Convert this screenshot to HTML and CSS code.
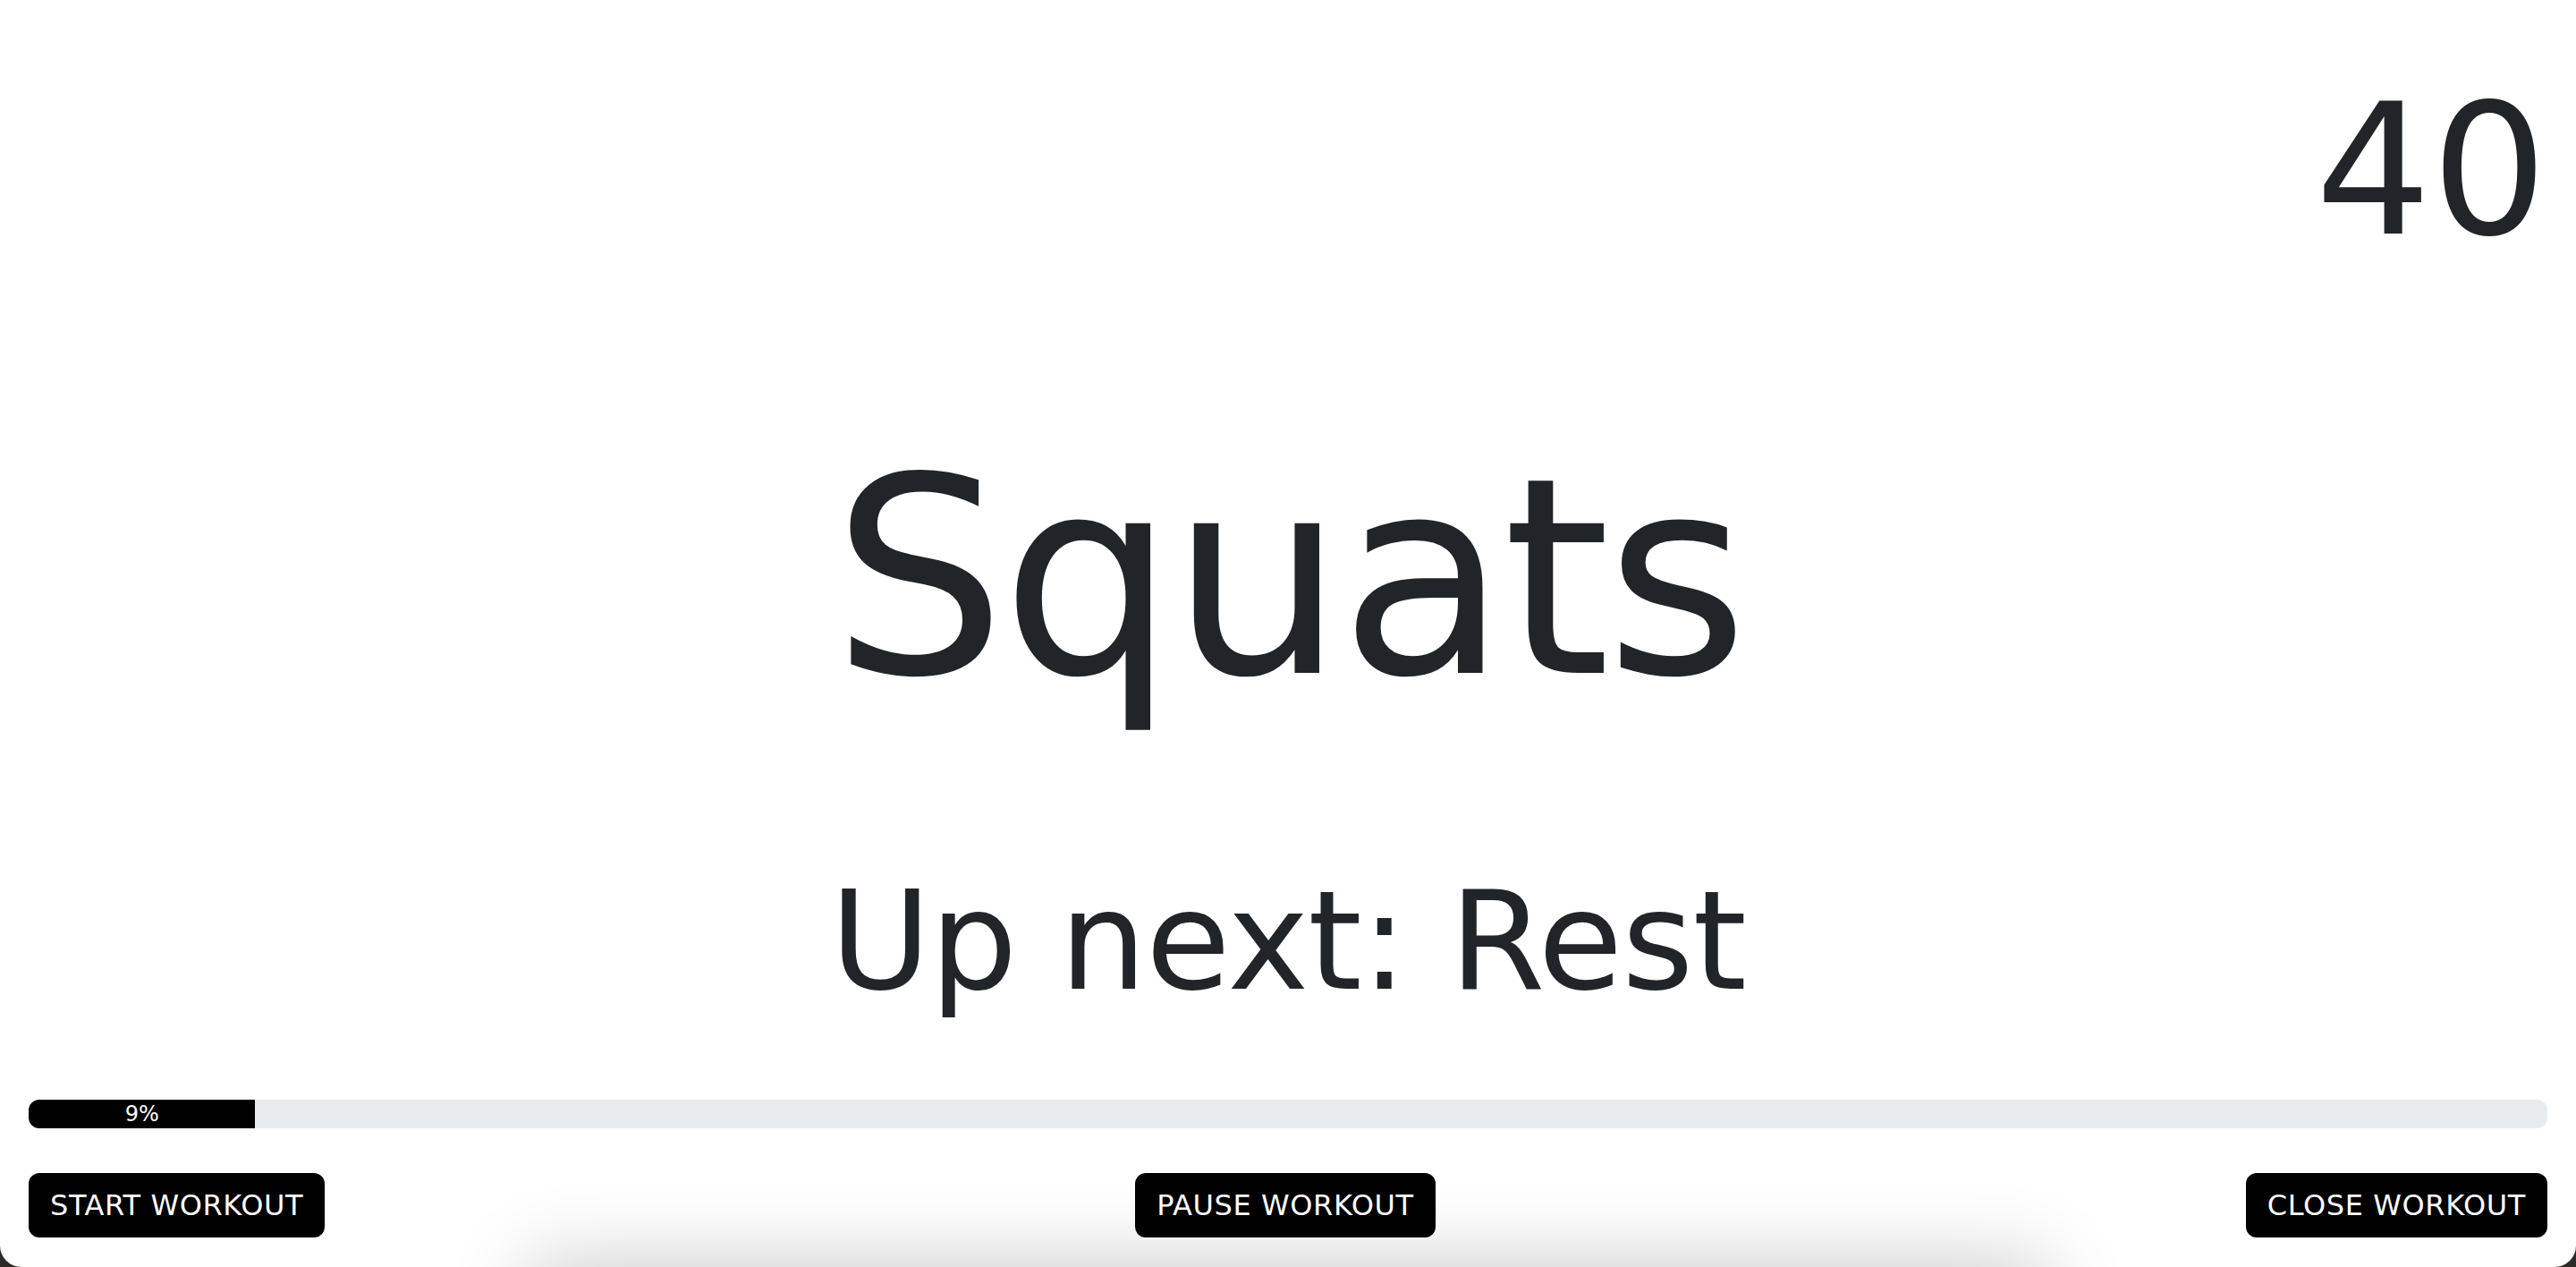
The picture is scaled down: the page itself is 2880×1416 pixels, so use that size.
FILE: index.html
```html
<!DOCTYPE html>
<html lang="en">
<head>
<meta charset="utf-8">
<title>Workout</title>
<link rel="stylesheet" href="styles.css">
</head>
<body>
<main class="card">
  <div class="haze"></div>
  <div class="timer">40</div>
  <h1 class="exercise">Squats</h1>
  <p class="next">Up next: Rest</p>
  <div class="progress">
    <div class="progress-bar" style="width: 9%">9%</div>
  </div>
  <div class="controls">
    <button class="btn">START WORKOUT</button>
    <button class="btn">PAUSE WORKOUT</button>
    <button class="btn">CLOSE WORKOUT</button>
  </div>
</main>
</body>
</html>
```
FILE: styles.css
```css
html, body {
  margin: 0;
  padding: 0;
  height: 100%;
  overflow: hidden;
}
body {
  background: #2b2a24;
  font-family: "DejaVu Sans", Verdana, sans-serif;
  color: #212529;
}
.card {
  position: relative;
  box-sizing: border-box;
  height: 1416px;
  background: #ffffff;
  border-radius: 0 0 24px 24px;
  overflow: hidden;
  padding: 0 32px;
  display: flex;
  flex-direction: column;
}
.haze {
  position: absolute;
  left: 620px;
  right: 620px;
  top: 1440px;
  height: 120px;
  box-shadow: 0 0 90px 30px rgba(0, 0, 0, 0.2);
}
.timer {
  font-size: 204px;
  line-height: 1;
  text-align: right;
  margin-top: 89px;
}
.exercise {
  font-size: 306px;
  font-weight: normal;
  line-height: 1;
  text-align: center;
  letter-spacing: -5px;
  margin: 200px 0 0;
}
.next {
  font-size: 154px;
  line-height: 1;
  text-align: center;
  letter-spacing: -1px;
  margin: 176px 0 0;
}
.progress {
  margin-top: 100px;
  height: 32px;
  background: #e9ecef;
  border-radius: 12px;
  overflow: hidden;
  display: flex;
}
.progress-bar {
  background: #000;
  color: #fff;
  font-size: 24px;
  display: flex;
  align-items: center;
  justify-content: center;
  white-space: nowrap;
}
.controls {
  position: relative;
  margin-top: 50px;
  display: flex;
  justify-content: space-between;
}
.btn {
  font-family: "DejaVu Sans", Verdana, sans-serif;
  font-size: 32px;
  letter-spacing: 0.6px;
  line-height: 48px;
  padding: 12px 24px;
  background: #000;
  color: #fff;
  border: 0;
  border-radius: 12px;
}
```
